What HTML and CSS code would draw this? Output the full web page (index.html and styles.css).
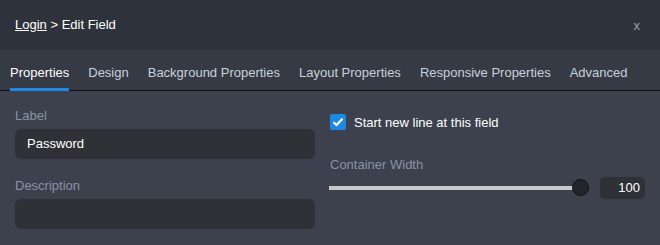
FILE: index.html
```html
<!DOCTYPE html>
<html>
<head>
<meta charset="utf-8">
<link rel="stylesheet" href="styles.css">
</head>
<body>
<div class="dialog">
  <div class="header">
    <div class="title"><a class="crumb">Login</a> &gt; Edit Field</div>
    <div class="close">x</div>
  </div>
  <div class="tabs">
    <div class="tab active">Properties</div>
    <div class="tab">Design</div>
    <div class="tab">Background Properties</div>
    <div class="tab">Layout Properties</div>
    <div class="tab">Responsive Properties</div>
    <div class="tab">Advanced</div>
  </div>
  <div class="content">
    <div class="col left">
      <div class="field">
        <div class="lbl">Label</div>
        <div class="input">Password</div>
      </div>
      <div class="field">
        <div class="lbl">Description</div>
        <div class="input"></div>
      </div>
    </div>
    <div class="col right">
      <div class="check-row">
        <span class="checkbox">
          <svg width="12" height="10" viewBox="0 0 12 10"><path d="M1.5 5.2 L4.5 8 L10.5 1.8" fill="none" stroke="#fff" stroke-width="2.2"/></svg>
        </span>
        <span class="check-text">Start new line at this field</span>
      </div>
      <div class="lbl width-lbl">Container Width</div>
      <div class="slider-row">
        <div class="slider">
          <div class="track"></div>
          <div class="thumb"></div>
        </div>
        <div class="num">100</div>
      </div>
    </div>
  </div>
</div>
</body>
</html>
```
FILE: styles.css
```css
html, body {
  margin: 0;
  padding: 0;
  background: #3c414d;
}
body {
  font-family: "Liberation Sans", Arial, sans-serif;
  font-size: 13px;
  width: 660px;
  height: 245px;
  overflow: hidden;
}
.dialog {
  display: flex;
  flex-direction: column;
}
.header {
  height: 50px;
  background: #2e323b;
  display: flex;
  align-items: center;
  justify-content: space-between;
  padding: 0 20px 0 15px;
  box-sizing: border-box;
}
.title {
  color: #ffffff;
  font-size: 13px;
  margin-top: -2px;
}
.crumb {
  color: #ffffff;
  text-decoration: underline;
}
.close {
  color: #9aa3b2;
  font-size: 13px;
}
.tabs {
  height: 41px;
  background: #353a45;
  border-bottom: 1px solid #111318;
  display: flex;
  align-items: stretch;
  padding-left: 10px;
  box-sizing: border-box;
  gap: 19px;
}
.tab {
  color: #c9d1dd;
  display: flex;
  align-items: center;
  padding-top: 6px;
  box-sizing: border-box;
  border-bottom: 3px solid transparent;
  margin-bottom: -1px;
  font-size: 13px;
}
.tab.active {
  color: #ffffff;
  border-bottom: 3px solid #1e88e5;
}
.content {
  display: flex;
  padding: 16px 15px 0 15px;
  gap: 15px;
}
.col.left {
  width: 300px;
  display: flex;
  flex-direction: column;
  gap: 18px;
}
.col.right {
  flex: 1;
  display: flex;
  flex-direction: column;
}
.lbl {
  color: #8a93a3;
  font-size: 13px;
  height: 18px;
  line-height: 18px;
}
.field .lbl {
  margin-bottom: 4px;
}
.input {
  height: 30px;
  background: #2f3136;
  border-radius: 6px;
  color: #ffffff;
  padding: 0 12px;
  line-height: 30px;
  font-size: 13px;
}
.check-row {
  display: flex;
  align-items: center;
  gap: 8px;
  margin-top: 7px;
}
.checkbox {
  width: 16px;
  height: 16px;
  background: #1e88e5;
  border-radius: 2px;
  display: flex;
  align-items: center;
  justify-content: center;
}
.check-text {
  color: #ffffff;
}
.width-lbl {
  margin-top: 26px;
}
.slider-row {
  display: flex;
  align-items: center;
  margin-top: 3px;
  gap: 11px;
}
.slider {
  position: relative;
  width: 260px;
  height: 22px;
  margin-left: -1px;
}
.track {
  position: absolute;
  left: 0;
  right: 8px;
  top: 9px;
  height: 4px;
  background: #c8c8c8;
}
.thumb {
  position: absolute;
  right: 0;
  top: 2px;
  width: 17px;
  height: 17px;
  border-radius: 50%;
  background: #23252a;
  border: 1px solid #0f1012;
  box-sizing: border-box;
}
.num {
  width: 45px;
  height: 22px;
  background: #2f3136;
  border-radius: 5px;
  color: #ffffff;
  text-align: right;
  line-height: 22px;
  padding-right: 5px;
  box-sizing: border-box;
}
```
